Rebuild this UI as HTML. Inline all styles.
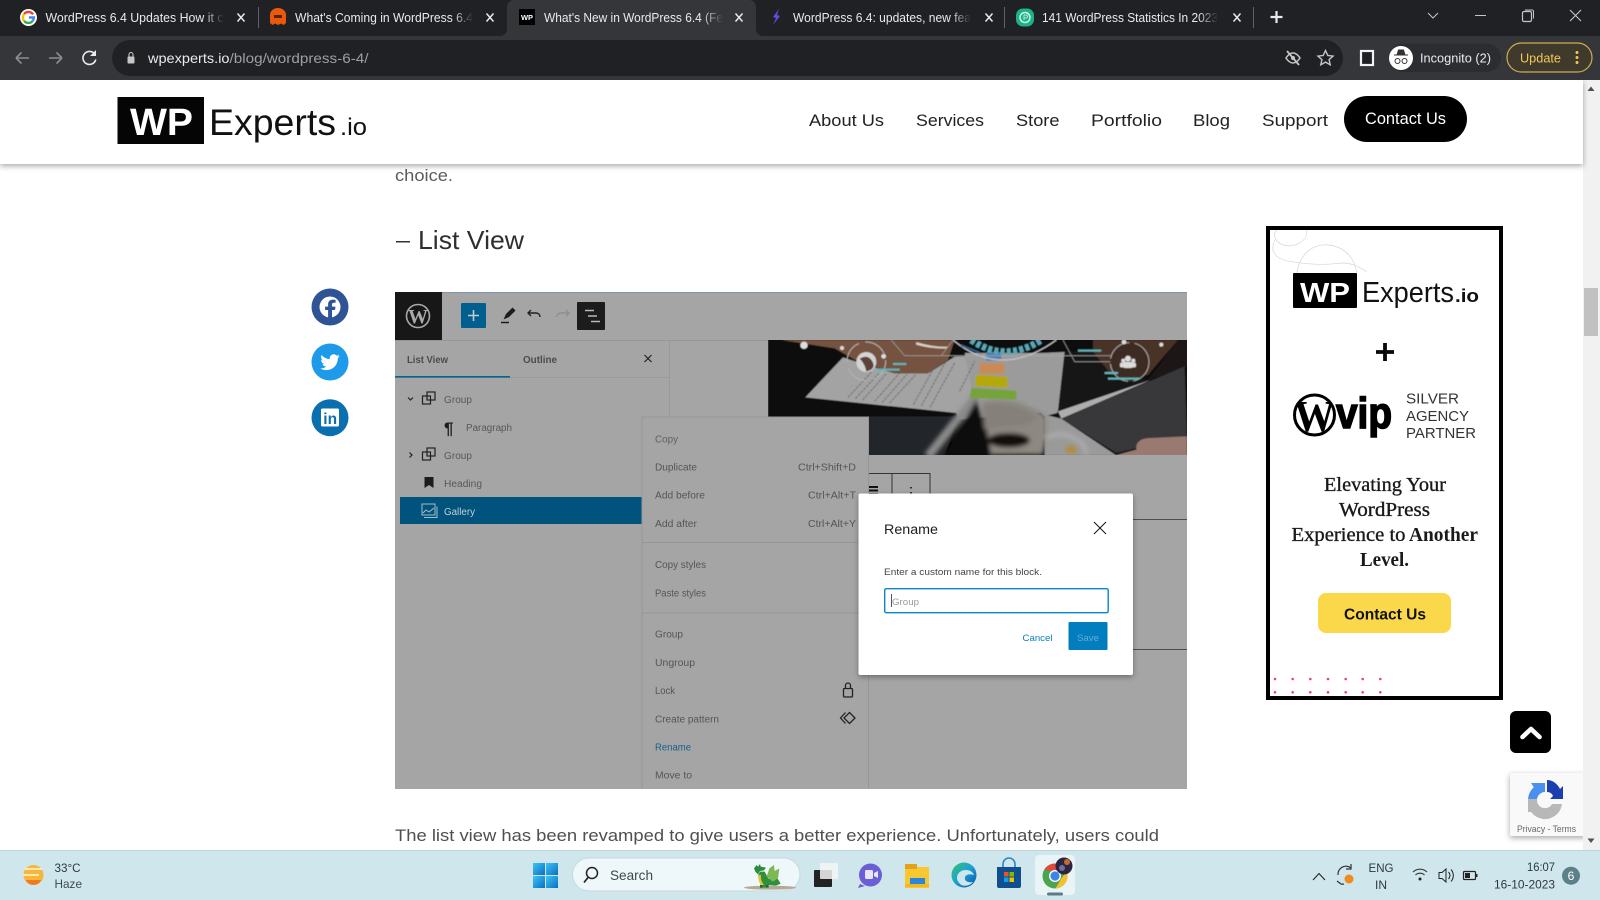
<!DOCTYPE html>
<html lang="en"><head><meta charset="utf-8"><title>What's New in WordPress 6.4</title>
<style>
html,body{margin:0;padding:0;width:1600px;height:900px;overflow:hidden;background:#fff}
svg{display:block;position:absolute;left:0;top:0}
text{font-family:"Liberation Sans",sans-serif}
.serif{font-family:"Liberation Serif",serif}
</style></head><body>
<svg width="1600" height="900" viewBox="0 0 1600 900" xmlns="http://www.w3.org/2000/svg">
<defs>
<linearGradient id="f1" x1="0" x2="1"><stop offset="0" stop-color="#202124" stop-opacity="0"/><stop offset="1" stop-color="#202124"/></linearGradient>
<linearGradient id="f2" x1="0" x2="1"><stop offset="0" stop-color="#35363a" stop-opacity="0"/><stop offset="1" stop-color="#35363a"/></linearGradient>
<filter id="sh" x="-10%" y="-10%" width="120%" height="130%"><feDropShadow dx="0" dy="2" stdDeviation="3" flood-color="#000" flood-opacity=".35"/></filter>
<filter id="b0"><feGaussianBlur stdDeviation="1.800"/></filter>
<filter id="b2"><feGaussianBlur stdDeviation="6"/></filter>
<clipPath id="ph"><rect x="768" y="340" width="419" height="115"/></clipPath>
<clipPath id="ad"><rect x="1270" y="230" width="229" height="466"/></clipPath>
<clipPath id="wc"><circle cx="1314.500" cy="415" r="20"/></clipPath>
<linearGradient id="win" x1="0" y1="0" x2="1" y2="1"><stop offset="0" stop-color="#3cc4f5"/><stop offset="1" stop-color="#0a6fc4"/></linearGradient>
<linearGradient id="edge" x1="0" y1="0" x2="1" y2="1"><stop offset="0" stop-color="#35c46a"/><stop offset=".5" stop-color="#1aa0d8"/><stop offset="1" stop-color="#0b4fa8"/></linearGradient>
</defs>

<!-- page -->
<rect width="1600" height="900" fill="#fff"/>
<text x="395" y="181" font-size="17" fill="#5c5c5c" textLength="58" lengthAdjust="spacingAndGlyphs">choice.</text>
<rect x="396" y="241" width="14" height="1.500" fill="#333"/>
<text x="418" y="249" font-size="26" fill="#2f2f2f" textLength="106" lengthAdjust="spacingAndGlyphs">List View</text>

<!-- share -->
<circle cx="330" cy="307" r="18.500" fill="#2f5496"/>
<circle cx="330" cy="307" r="10.500" fill="#fff"/>
<path d="M332 318v-8h3l.5-3.400H332v-2c0-1 .5-1.800 1.900-1.800h1.700v-2.900s-1.400-.3-2.800-.3c-2.900 0-4.700 1.800-4.700 4.700v2.300h-3v3.400h3v8z" fill="#2f5496"/>
<circle cx="330" cy="362" r="18.500" fill="#1d9bea"/>
<path transform="translate(320.300 352.500) scale(.81)" fill="#fff" d="M23.953 4.570a10 10 0 01-2.825.775 4.958 4.958 0 002.163-2.723c-.951.555-2.005.959-3.127 1.184a4.920 4.920 0 00-8.384 4.482C7.690 8.095 4.067 6.130 1.640 3.162a4.822 4.822 0 00-.666 2.475c0 1.710.870 3.213 2.188 4.096a4.904 4.904 0 01-2.228-.616v.060a4.923 4.923 0 003.946 4.827 4.996 4.996 0 01-2.212.085 4.936 4.936 0 004.604 3.417 9.867 9.867 0 01-6.102 2.105c-.390 0-.779-.023-1.170-.067a13.995 13.995 0 007.557 2.209c9.053 0 13.998-7.496 13.998-13.985 0-.210 0-.420-.015-.630A9.935 9.935 0 0024 4.590z"/>
<circle cx="330" cy="417.700" r="18.500" fill="#0a6fae"/>
<rect x="321" y="408.500" width="18" height="18" rx="1.500" fill="#fff"/>
<text x="323.300" y="424" font-size="15.500" font-weight="bold" fill="#0a6fae">in</text>

<!-- editor screenshot -->
<g id="shot">
<rect x="395" y="292" width="792" height="497" fill="#a5a5a5"/>
<rect x="395" y="292" width="792" height="1" fill="#7f95ad"/>
<rect x="395" y="340" width="792" height="1" fill="#979797"/>
<rect x="395" y="292" width="47" height="48" fill="#171717"/>
<circle cx="418" cy="316" r="11.500" fill="none" stroke="#a9a9a9" stroke-width="1.600"/>
<text class="serif" x="418" y="323" font-size="20" font-weight="bold" text-anchor="middle" fill="#a9a9a9">W</text>
<rect x="461" y="303" width="25" height="25" rx="1" fill="#005f8f"/>
<path d="M473.500 310v11M468 315.500h11" stroke="#c8c8c8" stroke-width="1.600"/>
<path d="M505 318l1.500-3.500 6-6 2 2-6 6zM501 322.500h8" stroke="#1c1c1c" stroke-width="1.500" fill="#1c1c1c"/>
<path d="M530 314l-3 3 3 3M527 317h8c2.500 0 4 1.500 4 4" transform="translate(1 -4)" fill="none" stroke="#222" stroke-width="1.400"/>
<path d="M568 313l3 3-3 3M571 316h-8c-2.500 0-4 1.500-4 4" transform="translate(-2 -3)" fill="none" stroke="#8e8e8e" stroke-width="1.400"/>
<rect x="577" y="302" width="28" height="28" rx="1" fill="#1c1c1c"/>
<path d="M585 310.500h9M588 316h9M591 321.500h9" stroke="#b8b8b8" stroke-width="1.500"/>

<rect x="669" y="340" width="1" height="449" fill="#999"/>
<rect x="395" y="377" width="274" height="1" fill="#999"/>
<rect x="395" y="376" width="115" height="1.600" fill="#006591"/>
<text x="407" y="363" font-size="10" font-weight="bold" fill="#3c3c3c" textLength="41" lengthAdjust="spacingAndGlyphs" opacity=".85">List View</text>
<text x="523" y="363" font-size="10" font-weight="bold" fill="#3c3c3c" textLength="34" lengthAdjust="spacingAndGlyphs" opacity=".85">Outline</text>
<path d="M644.500 355l7 7M651.500 355l-7 7" stroke="#222" stroke-width="1.200"/>

<g fill="#585858" font-size="10">
<text x="444" y="403" textLength="28" lengthAdjust="spacingAndGlyphs">Group</text>
<text x="466" y="431" textLength="46" lengthAdjust="spacingAndGlyphs">Paragraph</text>
<text x="444" y="459" textLength="28" lengthAdjust="spacingAndGlyphs">Group</text>
<text x="444" y="487" textLength="38" lengthAdjust="spacingAndGlyphs">Heading</text>
</g>
<path d="M408 397.500l2.500 2.500 2.500-2.500" fill="none" stroke="#222" stroke-width="1.200"/>
<path d="M409.500 452.500l2.500 2.500-2.500 2.500" fill="none" stroke="#222" stroke-width="1.200"/>
<g fill="none" stroke="#222" stroke-width="1.200">
<rect x="422.500" y="396" width="8" height="8"/><rect x="427" y="392" width="8" height="8"/>
<rect x="422.500" y="452" width="8" height="8"/><rect x="427" y="448" width="8" height="8"/>
</g>
<text x="444" y="434" font-size="17" font-weight="bold" fill="#1c1c1c">¶</text>
<path d="M424.500 477h9v11l-4.500-3-4.500 3z" fill="#1c1c1c"/>
<rect x="400" y="497" width="243" height="27" fill="#00537c"/>
<g fill="none" stroke="#a6bdcb" stroke-width="1"><rect x="422" y="504" width="13" height="11"/><path d="M424 517.500h13v-11M423 513l3-3 3 2 5-4"/></g>
<text x="444" y="515" font-size="10" fill="#c2cfd6" textLength="31" lengthAdjust="spacingAndGlyphs">Gallery</text>

<!-- photo -->
<g clip-path="url(#ph)"><g transform="translate(768 338) scale(.3333)"><g filter="url(#b0)">
<rect x="0" y="0" width="1260" height="360" fill="#0a0908"/>
<path d="M300 235h270l-40 120H300z" fill="#23262a"/>
<path d="M40 6h520l-20 60-60 40h-100l-110-35-70-40z" fill="#75523f"/>
<path d="M445 12q50 16 95 14l-6 6q-50 0-90-12z" fill="#d8d0c8"/>
<path d="M112 178L225 58l60 20 95 28h100l80-50 330-14-20 178-300 25-5-20z" fill="#a3a3a3"/>
<path d="M590 45h300l-22 180-40 10-40-40H620z" fill="#9b9b9b"/>
<path d="M870 220L1150 125 880 242z" fill="#aeaeae"/>
<path d="M890 40h90l60 70 100 15-270 95z" fill="#171716"/>
<path d="M975 6h255l-90 105h-110l-55-70z" fill="#4a3226"/>
<path d="M1230 6h30v80l-120 40z" fill="#1a1614"/>
<path d="M880 242l370-157 7 215-147 30-65 15z" fill="#38393b"/>
<path d="M830 230l50 12 165 110H830z" fill="#9a9a9a"/>
<path d="M1105 325q5-25 45-25l107-5v60H1030l75-20z" fill="#9a7a70"/>
<g stroke="#5c5c5c" stroke-width="3" opacity=".75" stroke-dasharray="9 3">
<path d="M240 178l70-75M262 182l70-75M284 186l70-78M320 190l75-85M342 194l75-85M364 196l78-85M436 200l70-125M460 204l72-130M486 208l75-135M575 160l45-90"/></g>
<g filter="url(#b2)"><path d="M480 355L625 175" stroke="#8a8a8a" stroke-width="26"/><path d="M625 185l50 170H530z" fill="#0b0b0e"/>
<path d="M640 190q120-20 195 45 5 60-10 115H670z" fill="#8d8982"/>
<path d="M640 200q100-20 170 40-40 30-100 25l-60 10z" fill="#85807a"/>
<ellipse cx="722" cy="307" rx="64" ry="22" fill="#120c08"/>
<path d="M835 300q60-30 110 20 10 15 10 30" fill="none" stroke="#aaa" stroke-width="14"/>
<rect x="895" y="325" width="30" height="20" fill="#b5892f"/></g>
<rect x="655" y="42" width="45" height="26" fill="#5080b4"/>
<rect x="635" y="75" width="75" height="32" fill="#c88b58"/>
<path d="M625 110l93 6v34l-98-6z" fill="#b5a80a"/>
<path d="M610 150l135 8v27l-140-5z" fill="#74a43c"/>
<path d="M555 6q145 120 310 0" fill="none" stroke="#c4c4c4" stroke-width="3.500"/>
<path d="M610 6q100 70 210 0" fill="none" stroke="#5aa8b5" stroke-width="20" stroke-dasharray="12 7"/>
<path d="M580 22l55 22" stroke="#2a5f8a" stroke-width="6"/>
<path d="M370 6l40 47h110l35-47M410 53h620M885 6l35 65h110" fill="none" stroke="#a8a8a8" stroke-width="1.800"/>
<circle cx="295" cy="70" r="58" fill="none" stroke="#b5b5b5" stroke-width="3" stroke-dasharray="70 20"/>
<circle cx="295" cy="72" r="30" fill="#d4d4d4"/><path d="M275 62q25-15 38 8t-18 30q-4-22-20-38z" fill="#5a4338"/>
<circle cx="1085" cy="72" r="58" fill="#3c2a20" stroke="#a8a8a8" stroke-width="3" stroke-dasharray="80 16"/>
<g fill="#dcdcdc"><circle cx="1080" cy="62" r="9"/><rect x="1065" y="72" width="30" height="18" rx="6"/><circle cx="1066" cy="68" r="6"/><circle cx="1096" cy="68" r="6"/><rect x="1056" y="74" width="12" height="14" rx="4"/><rect x="1092" y="74" width="12" height="14" rx="4"/></g>
<g fill="#ddd"><circle cx="108" cy="22" r="11"/><circle cx="222" cy="30" r="6"/><circle cx="347" cy="55" r="7"/><circle cx="1068" cy="12" r="7"/><circle cx="1180" cy="20" r="6"/></g>
<g stroke="#5fb8bd" stroke-width="6"><path d="M375 78h40M325 95h70M1010 105h40M1020 122h95M930 38h70"/></g>
</g></g></g>

<!-- block toolbar fragments -->
<path d="M868 473.500h62V495" fill="none" stroke="#333" stroke-width="1"/>
<path d="M892 473.500V495" stroke="#333" stroke-width="1"/>
<path d="M869 487h9M869 490.500h9M869 494h9" stroke="#111" stroke-width="2"/>
<path d="M911 487v1.500M911 492v1.500" stroke="#222" stroke-width="1.800"/>
<rect x="868" y="519" width="319" height="1" fill="#4e4e4e"/>
<rect x="868" y="649" width="319" height="1" fill="#4e4e4e"/>

<!-- context menu -->
<path d="M642 789V417h226.500V789" fill="#a5a5a5" stroke="#969696"/>
<rect x="642" y="542" width="226" height="1" fill="#969696"/>
<rect x="642" y="612.500" width="226" height="1" fill="#969696"/>
<g fill="#555" font-size="10">
<text x="655" y="442.500" textLength="23" lengthAdjust="spacingAndGlyphs" opacity=".85">Copy</text>
<text x="655" y="470.500" textLength="42" lengthAdjust="spacingAndGlyphs">Duplicate</text>
<text x="655" y="498.500" textLength="50" lengthAdjust="spacingAndGlyphs">Add before</text>
<text x="655" y="527" textLength="42" lengthAdjust="spacingAndGlyphs">Add after</text>
<text x="655" y="568" textLength="51" lengthAdjust="spacingAndGlyphs">Copy styles</text>
<text x="655" y="596.500" textLength="51" lengthAdjust="spacingAndGlyphs">Paste styles</text>
<text x="655" y="637.500" textLength="28" lengthAdjust="spacingAndGlyphs">Group</text>
<text x="655" y="666" textLength="40" lengthAdjust="spacingAndGlyphs">Ungroup</text>
<text x="655" y="694" textLength="20" lengthAdjust="spacingAndGlyphs">Lock</text>
<text x="655" y="722.500" textLength="64" lengthAdjust="spacingAndGlyphs">Create pattern</text>
<text x="655" y="750.500" textLength="36" lengthAdjust="spacingAndGlyphs" fill="#17608c">Rename</text>
<text x="655" y="778.500" textLength="37" lengthAdjust="spacingAndGlyphs">Move to</text>
<text x="856" y="470.500" text-anchor="end" textLength="58" lengthAdjust="spacingAndGlyphs">Ctrl+Shift+D</text>
<text x="856" y="498.500" text-anchor="end" textLength="48" lengthAdjust="spacingAndGlyphs">Ctrl+Alt+T</text>
<text x="856" y="527" text-anchor="end" textLength="48" lengthAdjust="spacingAndGlyphs">Ctrl+Alt+Y</text>
</g>
<g fill="none" stroke="#222" stroke-width="1.300"><rect x="843.500" y="688.500" width="9" height="8.500" rx="1"/><path d="M845.500 688.500v-3a2.500 2.500 0 0 1 5 0v3"/>
<path d="M849.500 712.500l5.500 5.500-5.500 5.500-5.500-5.500zM845.500 712.500l-5 5.500 5 5.500"/></g>

<!-- modal -->
<rect x="858.500" y="493.500" width="274.500" height="181.500" rx="2" fill="#fff" filter="url(#sh)"/>
<text x="884" y="534" font-size="13.500" fill="#1e1e1e" textLength="54" lengthAdjust="spacingAndGlyphs">Rename</text>
<path d="M1094 522l12 12M1106 522l-12 12" stroke="#1e1e1e" stroke-width="1.100"/>
<text x="884" y="575" font-size="9.500" fill="#444" textLength="158" lengthAdjust="spacingAndGlyphs">Enter a custom name for this block.</text>
<rect x="884.700" y="588.700" width="223.500" height="24" rx="1.500" fill="#fff" stroke="#0a85c6" stroke-width="1.400"/>
<rect x="891" y="594" width="1" height="13" fill="#555"/>
<text x="892" y="605" font-size="9.500" fill="#9a9a9a" textLength="27" lengthAdjust="spacingAndGlyphs">Group</text>
<text x="1022.500" y="641" font-size="9.500" fill="#0a7fbd" textLength="30" lengthAdjust="spacingAndGlyphs">Cancel</text>
<rect x="1068.500" y="622" width="39" height="28" rx="1" fill="#027dbd"/>
<text x="1077" y="641" font-size="9.500" fill="#5fb0d8" textLength="22" lengthAdjust="spacingAndGlyphs">Save</text>
</g>

<text x="395" y="841" font-size="17" fill="#4f4f4f" textLength="764" lengthAdjust="spacingAndGlyphs">The list view has been revamped to give users a better experience. Unfortunately, users could</text>

<!-- ad box -->
<g id="ad-box">
<rect x="1268" y="228" width="233" height="470" fill="#fff" stroke="#000" stroke-width="4"/>
<g clip-path="url(#ad)"><g transform="translate(1250 220) scale(.3333)" fill="none" stroke="#d4d4d4" stroke-width="2">
<path d="M170 30c5 35-40 55-70 45S70 40 80 30"/>
<path d="M140 160c10-60 50-90 95-85 50 5 80 40 85 85"/>
<path d="M75 60c-20 40 10 60 50 65 50 8 100 10 140 5 35-5 60 10 85 25"/></g></g>
<rect x="1293" y="273" width="64" height="35" rx="1" fill="#000"/>
<text x="1325" y="302" font-size="28" font-weight="bold" fill="#fff" text-anchor="middle" textLength="50" lengthAdjust="spacingAndGlyphs">WP</text>
<text x="1362" y="302" font-size="29" fill="#111" textLength="92" lengthAdjust="spacingAndGlyphs">Experts</text>
<text x="1455" y="302" font-size="18" font-weight="bold" fill="#111" textLength="24" lengthAdjust="spacingAndGlyphs">.io</text>
<path d="M1376 352h18M1385 343v18" stroke="#0a0a0a" stroke-width="3.800"/>
<circle cx="1314.500" cy="415" r="20" fill="none" stroke="#000" stroke-width="3"/>
<g clip-path="url(#wc)"><text class="serif" x="1314.500" y="431" font-size="44" font-weight="bold" text-anchor="middle" fill="#000" textLength="41" lengthAdjust="spacingAndGlyphs">W</text></g>
<text x="1336" y="428" font-size="44" font-weight="bold" fill="#000" stroke="#000" stroke-width="1.600" textLength="56" lengthAdjust="spacingAndGlyphs">vip</text>
<g font-size="15" fill="#333">
<text x="1406" y="403.500" textLength="53" lengthAdjust="spacingAndGlyphs">SILVER</text>
<text x="1406" y="421" textLength="63" lengthAdjust="spacingAndGlyphs">AGENCY</text>
<text x="1406" y="438" textLength="70" lengthAdjust="spacingAndGlyphs">PARTNER</text>
</g>
<g class="serif" font-size="20" fill="#1a1a1a">
<text class="serif" x="1324" y="491" stroke="#1a1a1a" stroke-width=".35" textLength="122" lengthAdjust="spacingAndGlyphs">Elevating Your</text>
<text class="serif" x="1339" y="516" stroke="#1a1a1a" stroke-width=".35" textLength="91" lengthAdjust="spacingAndGlyphs">WordPress</text>
<text class="serif" x="1291.500" y="541" stroke="#1a1a1a" stroke-width=".35" textLength="114" lengthAdjust="spacingAndGlyphs">Experience to</text>
<text class="serif" x="1409" y="541" font-weight="bold" textLength="69" lengthAdjust="spacingAndGlyphs">Another</text>
<text class="serif" x="1360" y="566" font-weight="bold" textLength="49" lengthAdjust="spacingAndGlyphs">Level.</text>
</g>
<rect x="1318" y="593" width="133" height="40" rx="8" fill="#fbd84a"/>
<text x="1344" y="619.500" font-size="16" font-weight="bold" fill="#111" textLength="82" lengthAdjust="spacingAndGlyphs">Contact Us</text>
<g fill="#f0406a">
<circle cx="1275" cy="679" r="1.300"/><circle cx="1292.700" cy="679" r="1.300"/><circle cx="1310.300" cy="679" r="1.300"/><circle cx="1328" cy="679" r="1.300"/><circle cx="1345.700" cy="679" r="1.300"/><circle cx="1362.700" cy="679" r="1.300"/><circle cx="1380.300" cy="679" r="1.300"/>
<circle cx="1275" cy="692.300" r="1.300"/><circle cx="1292.700" cy="692.300" r="1.300"/><circle cx="1310.300" cy="692.300" r="1.300"/><circle cx="1328" cy="692.300" r="1.300"/><circle cx="1345.700" cy="692.300" r="1.300"/><circle cx="1362.700" cy="692.300" r="1.300"/><circle cx="1380.300" cy="692.300" r="1.300"/>
</g>
</g>

<!-- back to top -->
<rect x="1510" y="711" width="41" height="42" rx="6" fill="#000"/>
<path d="M1522.500 737l8.500-8 8.500 8" fill="none" stroke="#fff" stroke-width="4.600" stroke-linecap="round" stroke-linejoin="round"/>

<!-- recaptcha -->
<rect x="1510" y="773" width="76" height="63" rx="2" fill="#f9f9f9" filter="url(#sh)"/>
<path d="M1528 800a17 17 0 0 1 17-17v9a8 8 0 0 0-8 8z" fill="#4a90f0"/>
<path d="M1531 783h14v9h-8z" fill="#4a90f0"/>
<path d="M1547 780v12c3 0 5 1.500 6 4l-3 3h13v-13l-3 3c-2.500-5-7-9-13-9z" fill="#1b3fae"/>
<path d="M1528 800h9a8 8 0 0 0 15 4h10a17 17 0 0 1-34-4z" fill="#b8b8b8"/>
<rect x="1528" y="799" width="9" height="13" fill="#b8b8b8"/>
<text x="1517" y="832" font-size="9" fill="#666" textLength="59" lengthAdjust="spacingAndGlyphs">Privacy - Terms</text>

<!-- scrollbar -->
<rect x="1583" y="80" width="17" height="770" fill="#f1f1f1"/>
<rect x="1584" y="288" width="14" height="48" fill="#c1c1c1"/>
<path d="M1591 86.500l3.500 4.500h-7z" fill="#505050"/>
<path d="M1591 843l3.500-4.500h-7z" fill="#505050"/>

<!-- site header -->
<g id="site-header">
<rect y="80" width="1583" height="84" fill="#fff" filter="url(#sh)"/>
<rect x="117.500" y="97" width="86.500" height="47" fill="#050505"/>
<text x="130" y="135" font-size="38" font-weight="bold" fill="#fff" textLength="63" lengthAdjust="spacingAndGlyphs">WP</text>
<text x="209" y="135" font-size="37" fill="#111" textLength="127" lengthAdjust="spacingAndGlyphs">Experts</text>
<text x="340" y="135" font-size="24" fill="#111" textLength="27" lengthAdjust="spacingAndGlyphs">.io</text>
<g font-size="17" fill="#222">
<text x="809" y="126" textLength="75" lengthAdjust="spacingAndGlyphs">About Us</text>
<text x="916" y="126" textLength="68" lengthAdjust="spacingAndGlyphs">Services</text>
<text x="1016" y="126" textLength="43.500" lengthAdjust="spacingAndGlyphs">Store</text>
<text x="1091" y="126" textLength="71" lengthAdjust="spacingAndGlyphs">Portfolio</text>
<text x="1193" y="126" textLength="37" lengthAdjust="spacingAndGlyphs">Blog</text>
<text x="1262" y="126" textLength="66" lengthAdjust="spacingAndGlyphs">Support</text>
</g>
<rect x="1344" y="96" width="123" height="46" rx="23" fill="#000"/>
<text x="1365" y="124" font-size="16.500" fill="#fff" textLength="81" lengthAdjust="spacingAndGlyphs">Contact Us</text>
</g>

<!-- chrome -->
<g id="chrome">
<rect width="1600" height="36" fill="#202124"/>
<rect y="36" width="1600" height="44" fill="#35363a"/>
<path d="M500 36a7 7 0 0 0 7-7V7a7 7 0 0 1 7-7h235a7 7 0 0 1 7 7v22a7 7 0 0 0 7 7z" fill="#35363a"/>
<g font-size="12.500" fill="#e8eaed">
<text x="45.500" y="22" textLength="178" lengthAdjust="spacingAndGlyphs">WordPress 6.4 Updates How it c</text>
<text x="295" y="22" textLength="178" lengthAdjust="spacingAndGlyphs">What's Coming in WordPress 6.4</text>
<text x="544" y="22" textLength="179" lengthAdjust="spacingAndGlyphs">What's New in WordPress 6.4 (Fe</text>
<text x="793" y="22" textLength="178" lengthAdjust="spacingAndGlyphs">WordPress 6.4: updates, new fea</text>
<text x="1042" y="22" textLength="176" lengthAdjust="spacingAndGlyphs">141 WordPress Statistics In 2023</text>
</g>
<rect x="204" y="8" width="20" height="20" fill="url(#f1)"/><rect x="453" y="8" width="20" height="20" fill="url(#f1)"/><rect x="702" y="8" width="21" height="20" fill="url(#f2)"/><rect x="951" y="8" width="20" height="20" fill="url(#f1)"/><rect x="1198" y="8" width="20" height="20" fill="url(#f1)"/>
<g stroke="#e8eaed" stroke-width="1.500" fill="none">
<path d="M237.500 13.500l7 8M244.500 13.500l-7 8"/><path d="M486.500 13.500l7 8M493.500 13.500l-7 8"/><path d="M735.500 13.500l7 8M742.500 13.500l-7 8"/><path d="M985.500 13.500l7 8M992.500 13.500l-7 8"/><path d="M1233.500 13.500l7 8M1240.500 13.500l-7 8"/>
</g>
<g fill="#5f6368"><rect x="258" y="7" width="1" height="21"/><rect x="1004" y="7" width="1" height="21"/><rect x="1253" y="7" width="1" height="21"/></g>
<!-- favicons -->
<circle cx="28.500" cy="17.500" r="8.500" fill="#fff"/>
<g fill="none" stroke-width="2.400"><path d="M33 14.500a5.400 5.400 0 0 0-8.800-.5" stroke="#ea4335"/><path d="M24.200 14a5.400 5.400 0 0 0 0 7" stroke="#fbbc05"/><path d="M24.200 21a5.400 5.400 0 0 0 8.500-.2" stroke="#34a853"/><path d="M32.700 20.800a5 5 0 0 0 1.200-3.300h-5" stroke="#4285f4"/></g>
<path d="M270 15a8 7 0 0 1 16 0v8l-2.500 2-2.500-1.500-3 1.500-3-1.500-2.500 1.500-2.500-2z" fill="#e8590c"/><path d="M274 15h8v3h-8z" fill="#5a2206"/>
<rect x="519" y="9" width="16" height="16" fill="#000"/><text x="527" y="20" font-size="7.500" font-weight="bold" text-anchor="middle" fill="#fff">WP</text>
<path d="M779 9l-6 8 3 1-3 7 7-9-3-1z" fill="#5b4ee0"/>
<rect x="1016" y="8.500" width="18" height="18" rx="7" fill="#1cb38a"/><circle cx="1025" cy="17.500" r="5" fill="none" stroke="#d8f5ec" stroke-width="1.400"/><path d="M1024 15v5M1024 15h2a1.500 1.500 0 0 1 0 3h-2" fill="none" stroke="#d8f5ec" stroke-width=".8"/>
<path d="M1276.500 11v12M1270.500 17h12" stroke="#e8eaed" stroke-width="2.200"/>
<g stroke="#c4c7c5" fill="none" stroke-width="1"><path d="M1428 13l5 5 5-5"/><path d="M1475 15.500h11"/><rect x="1522.500" y="11.500" width="9" height="10" rx="1.500" stroke-width="1.200"/><path d="M1525 10h7a1.500 1.500 0 0 1 1.500 1.500v7"/><path d="M1570 10l11 11M1581 10l-11 11" stroke-width="1.100"/></g>

<path d="M16 58h13M16 58l5.500-5.500M16 58l5.500 5.500" fill="none" stroke="#8a8d90" stroke-width="1.600"/>
<path d="M62 58H49M62 58l-5.500-5.500M62 58l-5.500 5.500" fill="none" stroke="#8a8d90" stroke-width="1.600"/>
<path d="M95 54.500a6.500 6.500 0 1 0 .8 5" fill="none" stroke="#e8eaed" stroke-width="1.600"/><path d="M96 50v6h-6z" fill="#e8eaed"/>
<rect x="112" y="40" width="1231" height="36" rx="18" fill="#202124"/>
<rect x="127.500" y="56.500" width="7" height="7" rx="1" fill="#c4c7c5"/><path d="M129 56.500v-2a2 2 0 0 1 4 0v2" fill="none" stroke="#c4c7c5" stroke-width="1.100"/>
<text x="148" y="63" font-size="14" fill="#e8eaed" textLength="81.500" lengthAdjust="spacingAndGlyphs">wpexperts.io</text>
<text x="229.500" y="63" font-size="14" fill="#9aa0a6" textLength="139" lengthAdjust="spacingAndGlyphs">/blog/wordpress-6-4/</text>
<path d="M1286 58s3-5 7-5 7 5 7 5-3 5-7 5-7-5-7-5z" fill="none" stroke="#c4c7c5" stroke-width="1.500"/><circle cx="1293" cy="58" r="2" fill="#c4c7c5"/><path d="M1287 51l12 14" stroke="#c4c7c5" stroke-width="1.800"/>
<path d="M1325.500 50.500l2.300 5 5.200.6-3.900 3.500 1.100 5.200-4.700-2.700-4.700 2.700 1.100-5.200-3.900-3.500 5.200-.6z" fill="none" stroke="#c4c7c5" stroke-width="1.400"/>
<rect x="1361" y="51" width="12" height="14" fill="#202124" stroke="#f1f3f4" stroke-width="2.200"/>
<rect x="1389" y="43.500" width="112" height="28.500" rx="14" fill="#2c2d30"/>
<circle cx="1401" cy="58" r="12" fill="#fff"/>
<path d="M1394 55h14M1397 55l1.500-5h5l1.500 5z" stroke="#333" fill="#333" stroke-width="1"/>
<circle cx="1397.500" cy="61" r="2.500" fill="none" stroke="#333"/><circle cx="1404.500" cy="61" r="2.500" fill="none" stroke="#333"/>
<text x="1420" y="62.500" font-size="12.500" fill="#e8eaed" textLength="71" lengthAdjust="spacingAndGlyphs">Incognito (2)</text>
<rect x="1507" y="43" width="85" height="29" rx="14.500" fill="#3f3a2b" stroke="#d0ad55" stroke-width="1.200"/>
<text x="1520" y="62.500" font-size="12.500" fill="#f2c85c" textLength="41" lengthAdjust="spacingAndGlyphs">Update</text>
<g fill="#f2c85c"><circle cx="1577" cy="52.500" r="1.500"/><circle cx="1577" cy="57.500" r="1.500"/><circle cx="1577" cy="62.500" r="1.500"/></g>
</g>

<!-- taskbar -->
<g id="taskbar">
<rect y="850" width="1600" height="50" fill="#cfe6ec"/>
<rect y="850" width="1600" height="1" fill="#bcd6dd"/>
<circle cx="33.500" cy="875" r="10" fill="#f5b63a"/>
<path d="M25 869h17M23 875h16M26 881h15" stroke="#fbe7b8" stroke-width="2"/><path d="M25.500 880a9 9 0 0 0 16 0z" fill="#ef7a1f"/>
<text x="54.500" y="872" font-size="12" fill="#2c3a3e" textLength="26" lengthAdjust="spacingAndGlyphs">33°C</text>
<text x="54.500" y="888" font-size="12" fill="#3e4c50" textLength="27.500" lengthAdjust="spacingAndGlyphs">Haze</text>
<g fill="url(#win)"><rect x="533" y="863" width="12" height="12"/><rect x="546" y="863" width="12" height="12"/><rect x="533" y="876" width="12" height="12"/><rect x="546" y="876" width="12" height="12"/></g>
<rect x="572.500" y="858" width="227.500" height="33" rx="16.500" fill="#eef7f9" stroke="#c2dbe1"/>
<circle cx="592" cy="873" r="5.500" fill="none" stroke="#222" stroke-width="1.500"/><path d="M588 877.500l-4 5" stroke="#222" stroke-width="1.700"/>
<text x="610" y="880" font-size="14" fill="#3c4a4e" textLength="43" lengthAdjust="spacingAndGlyphs">Search</text>
<!-- dragon -->
<g transform="translate(740 855) scale(.3333)">
<ellipse cx="90" cy="98" rx="78" ry="6" fill="#b7a896"/>
<path d="M42 40l8-10 4 5 6-8 2 8 16 3-6 8-12 2-6 10-8-8z" fill="#2f8a3c"/>
<path d="M60 50l14 0 12 22 24-6 12 20-14 6-22-2-6 8H60l4-20-10-16z" fill="#2f8f3a"/>
<path d="M55 60q-2 22 12 34l4-6q-10-12-8-28z" fill="#e4c23a"/>
<path d="M80 65l8-25 14-10 2 18 14-8-4 30-16 10z" fill="#7cb856"/>
<path d="M60 90h8v8h-8zM78 90h8v8h-8z" fill="#1f6a2c"/>
</g>
<!-- task view -->
<rect x="814" y="870" width="18" height="17" rx="1" fill="#222"/><rect x="820" y="863" width="18" height="16" rx="1" fill="#f5f5f5" fill-opacity=".85"/>
<circle cx="870.500" cy="875" r="11.500" fill="#6a5fd4"/><path d="M860 884l-2 4 7-2z" fill="#6a5fd4"/><rect x="865" y="870" width="8" height="9" rx="1.500" fill="#e8e6fa"/><path d="M874 873l4-2v7l-4-2z" fill="#e8e6fa"/>
<path d="M905 864h9l3 3h12v21h-24z" fill="#f7c832"/><rect x="905" y="864" width="12" height="5" fill="#e3a21a"/><rect x="910" y="878" width="15" height="6" fill="#2a86d8"/><rect x="905" y="884" width="24" height="3" fill="#f2b821"/>
<circle cx="964" cy="875" r="12.500" fill="url(#edge)"/><path d="M957 878c0-5 4-8 9-8 4 0 7 2 8 5-3-1-8-1-9 2-1 4 3 6 8 5-3 4-10 5-13 2-2-2-3-4-3-6z" fill="#cfe6ec"/>
<path d="M997 867h24v19a2 2 0 0 1-2 2h-20a2 2 0 0 1-2-2z" fill="#0f4f8f"/><path d="M1003 867v-3a6 6 0 0 1 12 0v3" fill="none" stroke="#2a88c8" stroke-width="1.600"/>
<rect x="1004" y="872" width="4.500" height="4.500" fill="#f25022"/><rect x="1009.500" y="872" width="4.500" height="4.500" fill="#7fba00"/><rect x="1004" y="877.500" width="4.500" height="4.500" fill="#00a4ef"/><rect x="1009.500" y="877.500" width="4.500" height="4.500" fill="#ffb900"/>

<rect x="1035" y="855" width="40" height="40" rx="4" fill="#e9f4f7"/>
<circle cx="1055" cy="876" r="12.500" fill="#4aa54e"/>
<path d="M1044.200 869.800A12.500 12.500 0 0 1 1066.500 871H1055z" fill="#e04a3c"/>
<path d="M1066.500 871a12.500 12.500 0 0 1-11 17.500L1061 879z" fill="#f4c02c"/>
<circle cx="1055" cy="876" r="6" fill="#fff"/><circle cx="1055" cy="876" r="4.600" fill="#3a84ea"/>
<circle cx="1064" cy="866" r="8.500" fill="#2b2540"/><circle cx="1067" cy="862" r="3" fill="#c86a30"/><circle cx="1062" cy="868" r="3" fill="#6c6f9c"/>
<rect x="1047" y="892.500" width="16" height="3" rx="1.500" fill="#5e7a84"/>

<path d="M1313 880l6-6.500 6 6.500" fill="none" stroke="#222" stroke-width="1.100"/>
<path d="M1338 875a8 8 0 0 1 13-7M1337 881l4 3a8 8 0 0 0 3 0" fill="none" stroke="#333" stroke-width="1.200"/><path d="M1351 864v5h-5" fill="none" stroke="#333" stroke-width="1.200"/><circle cx="1349" cy="879" r="4.500" fill="#f08a1d"/>
<text x="1381" y="872" font-size="12" fill="#2c3a3e" text-anchor="middle" textLength="25" lengthAdjust="spacingAndGlyphs">ENG</text>
<text x="1381" y="889" font-size="12" fill="#2c3a3e" text-anchor="middle" textLength="12" lengthAdjust="spacingAndGlyphs">IN</text>
<path d="M1413 872a10 10 0 0 1 14 0M1415.500 875a6.500 6.500 0 0 1 9 0" fill="none" stroke="#333" stroke-width="1.100"/><circle cx="1420" cy="879" r="1.500" fill="#222"/>
<path d="M1439 872.500h3l4-3.500v13l-4-3.500h-3z" fill="none" stroke="#222"/><path d="M1448.500 872a5 5 0 0 1 0 7M1451 869.500a9 9 0 0 1 0 12" fill="none" stroke="#222"/>
<rect x="1463.500" y="871.500" width="12" height="8" rx="1" fill="none" stroke="#222" stroke-width="1.200"/><rect x="1465" y="873" width="5" height="5" fill="#222"/><rect x="1476" y="874" width="1.500" height="3" fill="#222"/>
<text x="1555" y="871" font-size="12" fill="#2c3a3e" text-anchor="end" textLength="28" lengthAdjust="spacingAndGlyphs">16:07</text>
<text x="1555" y="888.500" font-size="12" fill="#2c3a3e" text-anchor="end" textLength="61" lengthAdjust="spacingAndGlyphs">16-10-2023</text>
<circle cx="1571" cy="875.700" r="9" fill="#5b8088"/>
<text x="1571" y="880" font-size="12" fill="#fff" text-anchor="middle">6</text>
</g>
</svg>
</body></html>
